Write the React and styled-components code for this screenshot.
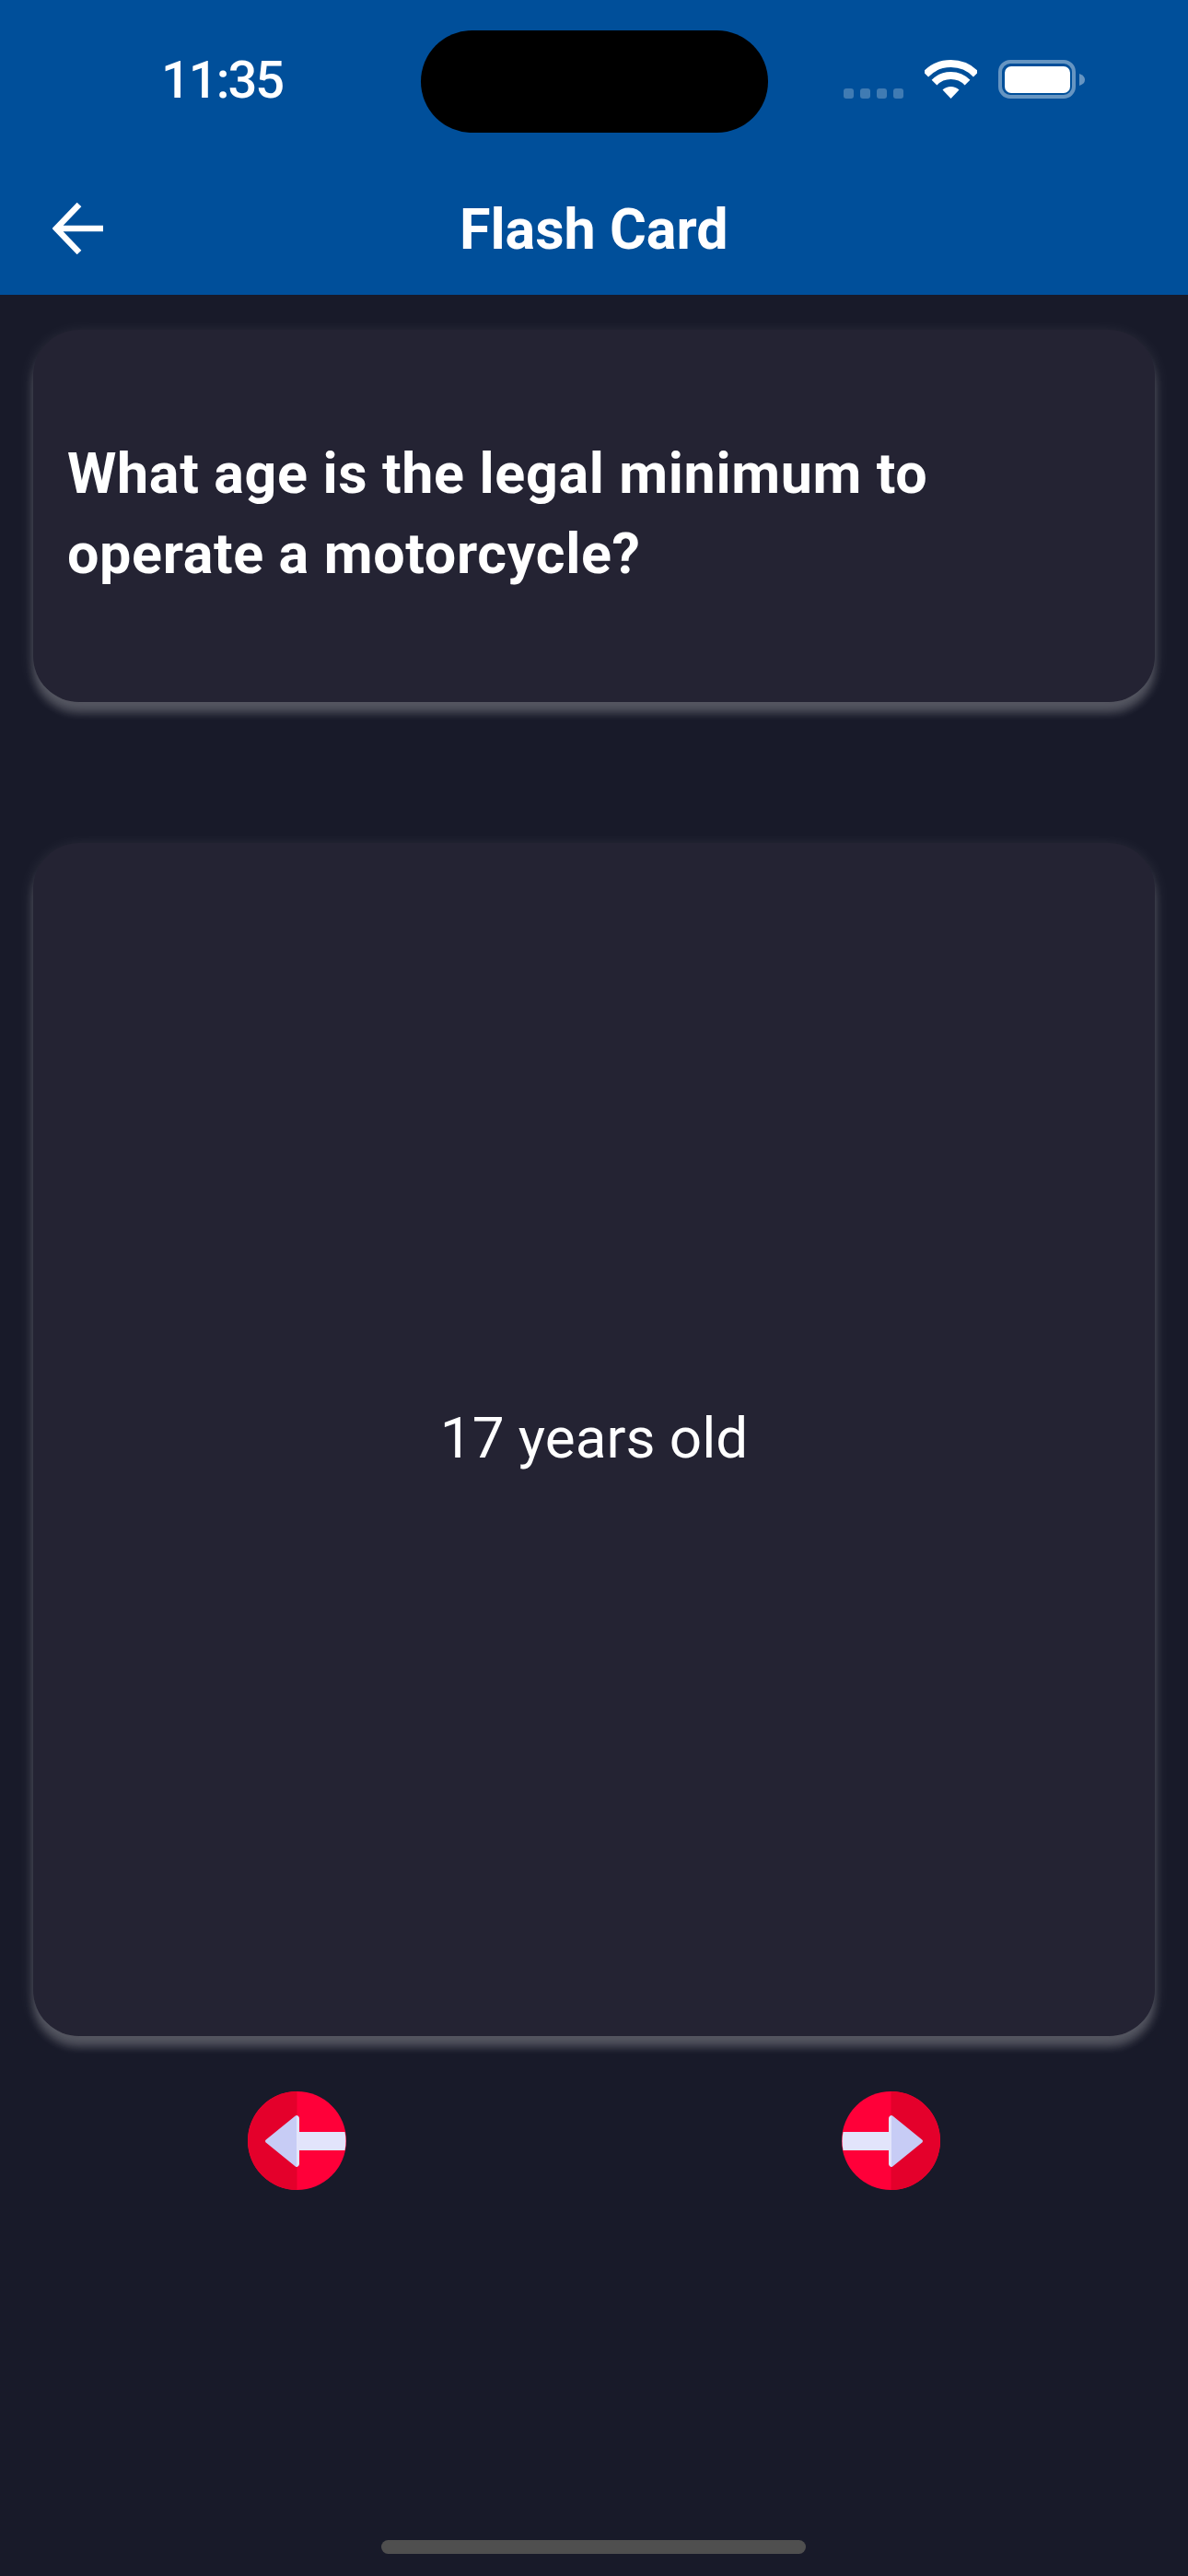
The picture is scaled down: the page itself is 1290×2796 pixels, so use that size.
import React from "react";
import styled, { createGlobalStyle } from "styled-components";

const GlobalStyle = createGlobalStyle`
  html, body {
    margin: 0;
    padding: 0;
    background: #181a29;
  }
  * {
    box-sizing: border-box;
  }
`;

const Screen = styled.div`
  position: relative;
  width: 1290px;
  height: 2796px;
  display: flex;
  flex-direction: column;
  background: #181a29;
  font-family: Roboto, "Noto Sans", sans-serif;
  color: #fff;
  overflow: hidden;
`;

const AppBar = styled.header`
  height: 320px;
  background: #004f9a;
  display: flex;
  flex-direction: column;
`;

const StatusBar = styled.div`
  height: 176px;
  padding-top: 33px;
  display: grid;
  grid-template-columns: 457px 377px 1fr;
`;

const Time = styled.div`
  padding-left: 175px;
  padding-top: 21px;
  font-family: Roboto, sans-serif;
  font-size: 56px;
  font-weight: 500;
  line-height: 66px;
  letter-spacing: -2px;
`;

const Island = styled.div`
  height: 111px;
  background: #000;
  border-radius: 56px;
`;

const StatusIcons = styled.div`
  padding: 32px 0 0 82px;
  display: flex;
  align-items: flex-start;
`;

const SignalDots = styled.div`
  display: flex;
  gap: 7px;
  margin: 31px 23px 0 0;
`;

const Dot = styled.span`
  width: 11px;
  height: 11px;
  border-radius: 3px;
  background: rgba(255, 255, 255, 0.25);
`;

const Battery = styled.svg`
  margin-left: 23px;
`;

const NavRow = styled.div`
  flex: 1;
  display: flex;
  align-items: center;
  padding-left: 57px;
`;

const BackIcon = styled.svg`
  display: block;
`;

const Title = styled.h1`
  margin: 2px 0 0 386px;
  width: 290px;
  font-size: 61px;
  font-weight: 700;
  line-height: 72px;
  white-space: nowrap;
`;

const Content = styled.main`
  flex: 1;
  padding: 38px 36px 0;
  display: flex;
  flex-direction: column;
`;

const Card = styled.section`
  height: ${(p) => p.$height}px;
  margin-bottom: ${(p) => p.$gap}px;
  background: #242333;
  border-radius: 50px;
  box-shadow: 0 5px 18px rgba(255, 255, 255, 0.12),
    0 12px 10px rgba(255, 255, 255, 0.2);
  display: flex;
  align-items: center;
  padding: 0 37px;
`;

const Question = styled.p`
  margin: 0 0 4px;
  font-size: 61px;
  font-weight: 700;
  line-height: 87px;
  letter-spacing: 0.65px;
`;

const Answer = styled.p`
  margin: 0 0 3px;
  width: 100%;
  text-align: center;
  font-size: 62px;
  font-weight: 400;
  line-height: 72px;
`;

const Controls = styled.div`
  margin: 0 -36px;
  display: grid;
  grid-template-columns: 1fr 1fr;
  justify-items: center;
`;

const RoundButton = styled.button`
  width: 107px;
  height: 107px;
  padding: 0;
  border: 0;
  background: none;
  display: block;
`;

const ArrowSvg = styled.svg`
  display: block;
  transform: ${(p) => (p.$flip ? "scaleX(-1)" : "none")};
`;

const HomeIndicator = styled.div`
  position: absolute;
  left: 414px;
  top: 2757px;
  width: 461px;
  height: 15px;
  border-radius: 8px;
  background: #4f4f4f;
`;

const Wifi = () => (
  <svg width="57" height="42" viewBox="0 0 57 42">
    <path d="M1.2 15.6A38 38 0 0 1 55.8 15.6" fill="none" stroke="#fff" strokeWidth="8" />
    <path d="M10.5 24.6A25 25 0 0 1 46.5 24.6" fill="none" stroke="#fff" strokeWidth="8" />
    <path d="M28.5 42L19.5 32.6A13 13 0 0 1 37.5 32.6Z" fill="#fff" />
  </svg>
);

const ArrowCircle = ({ flip }) => (
  <RoundButton>
    <ArrowSvg $flip={flip} width="107" height="107" viewBox="0 0 107 107">
      <circle cx="53.5" cy="53.5" r="53.5" fill="#ff0039" />
      <path d="M53.5 0A53.5 53.5 0 0 0 53.5 107Z" fill="#e4002b" />
      <path d="M53 44H105.5Q107.5 54 105.5 64H53Z" fill="#e2e4fb" />
      <path d="M53 28L21 54L53 80Z" fill="#c7ccf5" stroke="#c7ccf5" strokeWidth="4" strokeLinejoin="round" />
      <path d="M53 26.5Q56 26.5 56 29.5V78.5Q56 81.5 53 81.5Z" fill="#e2e4fb" />
    </ArrowSvg>
  </RoundButton>
);

export default function App() {
  return (
    <Screen>
      <GlobalStyle />
      <AppBar>
        <StatusBar>
          <Time>11:35</Time>
          <Island />
          <StatusIcons>
            <SignalDots>
              <Dot />
              <Dot />
              <Dot />
              <Dot />
            </SignalDots>
            <Wifi />
            <Battery width="94" height="42" viewBox="0 0 94 42">
              <rect x="2" y="2" width="80" height="38" rx="11" fill="none" stroke="rgba(255,255,255,0.4)" strokeWidth="4" />
              <rect x="7" y="7" width="71" height="29" rx="7" fill="#fff" />
              <path d="M88 15Q94 17 94 21.5Q94 26 88 28Z" fill="rgba(255,255,255,0.4)" />
            </Battery>
          </StatusIcons>
        </StatusBar>
        <NavRow>
          <BackIcon width="56" height="56" viewBox="0 0 56 56">
            <path d="M55 28H4M29 2L4 28L29 54" fill="none" stroke="#fff" strokeWidth="6.5" />
          </BackIcon>
          <Title>Flash Card</Title>
        </NavRow>
      </AppBar>
      <Content>
        <Card $height={404} $gap={153}>
          <Question>
            What age is the legal minimum to
            <br />
            operate a motorcycle?
          </Question>
        </Card>
        <Card $height={1295} $gap={60}>
          <Answer>17 years old</Answer>
        </Card>
        <Controls>
          <ArrowCircle />
          <ArrowCircle flip />
        </Controls>
      </Content>
      <HomeIndicator />
    </Screen>
  );
}
